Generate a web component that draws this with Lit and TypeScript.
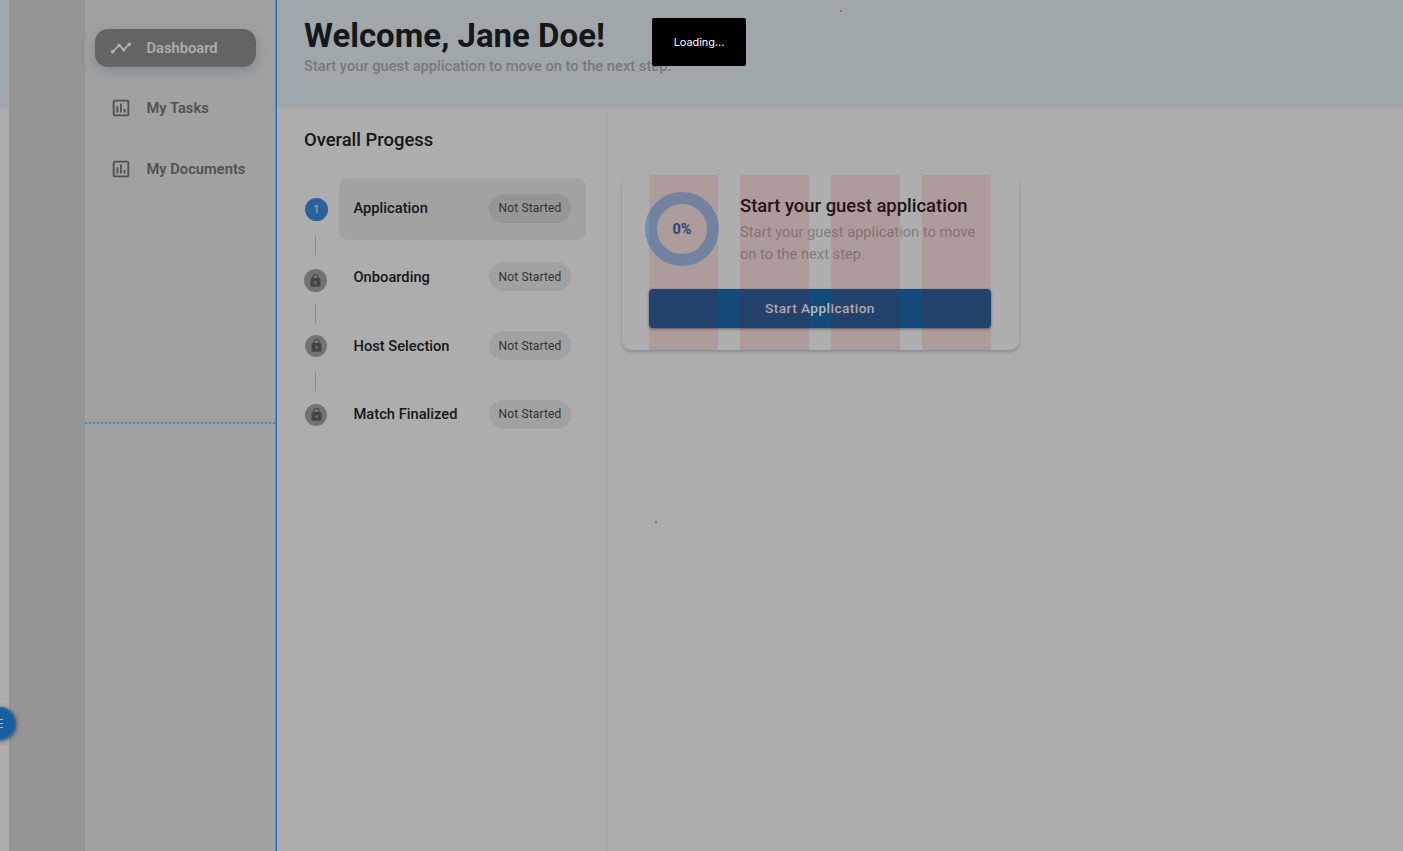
import { LitElement, html, css, svg } from "lit";
import { customElement } from "lit/decorators.js";

const chartIcon = svg`<svg class="icon" viewBox="0 0 24 24" width="22" height="22"><path fill="currentColor" d="M9 17H7v-7h2v7zm4 0h-2V7h2v10zm4 0h-2v-4h2v4zm2 2H5V5h14v14zm0-16H5c-1.100 0-2 .9-2 2v14c0 1.100.9 2 2 2h14c1.100 0 2-.9 2-2V5c0-1.100-.9-2-2-2z"/></svg>`;
const trendIcon = svg`<svg class="icon" viewBox="0 0 24 24" width="22" height="22"><path fill="currentColor" d="M23 8c0 1.100-.9 2-2 2-.18 0-.35-.02-.51-.07l-3.560 3.550c.05.16.07.34.07.52 0 1.100-.9 2-2 2s-2-.9-2-2c0-.18.02-.36.07-.52l-2.550-2.550c-.16.05-.34.07-.52.07s-.36-.02-.52-.07l-4.550 4.560c.05.16.07.33.07.51 0 1.100-.9 2-2 2s-2-.9-2-2 .9-2 2-2c.18 0 .35.02.51.07l4.560-4.550C8.020 9.360 8 9.180 8 9c0-1.100.9-2 2-2s2 .9 2 2c0 .18-.02.36-.07.52l2.550 2.550c.16-.05.34-.07.52-.07s.36.02.52.07l3.550-3.560C19.020 8.350 19 8.180 19 8c0-1.100.9-2 2-2s2 .9 2 2z"/></svg>`;
const lockIcon = svg`<svg viewBox="0 0 24 24" width="15" height="15"><path fill="currentColor" d="M18 8h-1V6c0-2.760-2.240-5-5-5S7 3.240 7 6v2H6c-1.100 0-2 .9-2 2v10c0 1.100.9 2 2 2h12c1.100 0 2-.9 2-2V10c0-1.100-.9-2-2-2zm-6 9c-1.100 0-2-.9-2-2s.9-2 2-2 2 .9 2 2-.9 2-2 2zm3.100-9H8.900V6c0-1.710 1.390-3.100 3.100-3.100 1.710 0 3.100 1.390 3.100 3.100v2z"/></svg>`;

@customElement("app-root")
export class AppRoot extends LitElement {
  static styles = css`
    :host {
      display: block;
      position: relative;
      width: 100%;
      height: 851px;
      overflow: hidden;
      background: #adadad;
      color: #161718;
      font-family: Roboto, "Liberation Sans", sans-serif;
      white-space: nowrap;
    }
    * { box-sizing: border-box; }
    svg { display: block; }
    .page { display: flex; height: 851px; }
    .edge { width: 9px; }
    .edge-top { height: 108px; background: #a0a7ab; border-bottom: 0; box-shadow: 0 1px 0 #a6aaac; }
    .rail { width: 76px; background: #959595; }
    .sidebar {
      width: 192px;
      background: #a1a1a1;
      border-right: 1px solid #2773b5;
      box-shadow: inset -1px 0 0 #6d8193;
      color: #515151;
    }
    .nav {
      height: 423px;
      padding: 28.500px 0 0 10px;
      display: flex;
      flex-direction: column;
      gap: 22px;
    }
    .rule { height: 2px; width: 190px; margin-top: -1px; background: repeating-linear-gradient(90deg, #5886a7 0 2.500px, #8c9aa4 2.500px 4px); }
    .item {
      height: 38.500px;
      width: 161px;
      display: flex;
      align-items: center;
      padding-left: 15px;
      gap: 14.500px;
      font-size: 14.700px;
      font-weight: 600;
    }
    .item.active {
      background: #646464;
      color: #adadad;
      border-radius: 13px;
      box-shadow: 0 4px 12px rgba(95, 118, 134, 0.5);
    }
    .main { flex: 1; display: flex; flex-direction: column; }
    .header { height: 108px; background: #a0a7ab; padding: 16px 0 0 27px; box-shadow: 0 1px 0 #a6aaac; }
    .title { font-size: 33px; line-height: 40px; font-weight: 700; margin: 0; }
    .sub { font-size: 14.700px; line-height: 20px; color: #76797b; font-weight: 500; }
    .body { flex: 1; display: flex; }
    .progress { width: 330px; border-right: 1px solid #a2a2a2; padding: 20px 0 0 27px; }
    .h2 { font-size: 18.400px; line-height: 23px; font-weight: 500; margin: 0 0 26.500px; }
    .step { display: flex; height: 69px; }
    .step.first { height: 66px; }
    .track { width: 35px; display: flex; flex-direction: column; }
    .dot {
      width: 22px;
      height: 22px;
      border-radius: 50%;
      background: #737373;
      color: #454545;
      display: flex;
      align-items: center;
      justify-content: center;
      margin: 22px 0 0 1px;
      flex: none;
    }
    .first .dot { width: 23px; height: 23px; margin-top: 20px; background: #2b629e; color: #a3afbc; font-size: 11.500px; }
    .first + .step .dot { width: 23px; height: 23px; margin: 25px 0 0; }
    .bar { width: 1px; height: 20px; margin: 14px 0 0 11px; background: #8c8c8c; flex: none; }
    .first + .step .bar { margin-top: 12px; }
    .card-row {
      width: 247px;
      height: 62px;
      border-radius: 9px;
      display: flex;
      align-items: center;
      justify-content: space-between;
      padding: 0 15px 0 14.500px;
      font-size: 14.700px;
      font-weight: 500;
    }
    .first .card-row { background: #a2a2a2; padding-bottom: 1px; }
    .step:not(.first) .card-row { margin-top: 2.300px; }
    .step:last-child .card-row { margin-top: 1.500px; }
    .chip {
      width: 82px;
      height: 29px;
      border-radius: 15px;
      background: #a1a1a1;
      color: #313233;
      display: flex;
      align-items: center;
      justify-content: center;
      font-size: 12px;
      font-weight: 400;
      letter-spacing: 0.150px;
    }
    .first .chip { background: #969696; }
    .content { padding: 67px 0 0 15px; }
    .card {
      position: relative;
      width: 397px;
      height: 175px;
      border-radius: 9px;
      background: #aeaeae;
      box-shadow: 0 2px 3px rgba(80, 105, 130, 0.45);
      padding: 16.500px 27px 0;
    }
    .top { display: flex; height: 97px; }
    .ring {
      width: 74px;
      height: 74px;
      margin: 0 21px 0 -4px;
      padding-top: 2px;
      border: 12px solid #6b91b3;
      border-radius: 50%;
      display: flex;
      align-items: center;
      justify-content: center;
      color: #1b4d83;
      font-weight: 700;
      font-size: 14.500px;
    }
    .card-title { font-size: 18.450px; line-height: 24px; font-weight: 500; margin: 2.500px 0 3px; }
    .card-text { font-size: 14.670px; line-height: 22px; color: #808080; }
    .button {
      width: 342px;
      height: 39px;
      border: 0;
      padding: 0 0 1px;
      border-radius: 4px;
      background: #154b79;
      color: #b6b8bb;
      font: 500 13.700px/36px Roboto, sans-serif;
      letter-spacing: 0.420px;
      box-shadow: 0 1px 3px rgba(0, 0, 0, 0.45);
      display: block;
    }
    .guides { position: absolute; inset: 0 27px; display: flex; gap: 22px; pointer-events: none; }
    .guide { width: 69px; background: rgba(173, 0, 0, 0.1); }
    .toast {
      position: absolute;
      left: 652px;
      top: 18px;
      width: 94px;
      height: 48px;
      border-radius: 2px;
      background: #000;
      color: #fff;
      display: flex;
      align-items: center;
      justify-content: center;
      font: 400 10.900px Inter, sans-serif;
    }
    .fab {
      position: absolute;
      left: -17px;
      top: 707px;
      width: 33px;
      height: 33px;
      border-radius: 50%;
      background: #155fa0;
      border: 2px solid #2169a5;
      box-shadow: 0 1px 5px rgba(0, 0, 0, 0.6);
      display: flex;
      flex-direction: column;
      justify-content: center;
      gap: 3px;
      padding-left: 9px;
    }
    .line { width: 9px; height: 1px; background: #a8bac8; }
    .speck { position: absolute; width: 2px; height: 2px; background: #a9598a; }
    .speck.a { left: 840px; top: 10px; }
    .speck.b { left: 655px; top: 521px; }
  `;

  private steps = ["Application", "Onboarding", "Host Selection", "Match Finalized"];

  render() {
    return html`
      <div class="page">
        <div class="edge"><div class="edge-top"></div></div>
        <div class="rail"></div>
        <aside class="sidebar">
          <nav class="nav">
            <div class="item active">${trendIcon}<span>Dashboard</span></div>
            <div class="item">${chartIcon}<span>My Tasks</span></div>
            <div class="item">${chartIcon}<span>My Documents</span></div>
          </nav>
          <div class="rule"></div>
        </aside>
        <main class="main">
          <header class="header">
            <h1 class="title">Welcome, Jane Doe!</h1>
            <div class="sub">Start your guest application to move on to the next step.</div>
          </header>
          <div class="body">
            <section class="progress">
              <h2 class="h2">Overall Progess</h2>
              ${this.steps.map(
                (name, i) => html`<div class="step ${i === 0 ? "first" : ""}">
                  <div class="track">
                    <div class="dot">${i === 0 ? "1" : lockIcon}</div>
                    ${i < 3 ? html`<div class="bar"></div>` : ""}
                  </div>
                  <div class="card-row"><span>${name}</span><span class="chip">Not Started</span></div>
                </div>`
              )}
            </section>
            <section class="content">
              <div class="card">
                <div class="top">
                  <div class="ring">0%</div>
                  <div>
                    <h3 class="card-title">Start your guest application</h3>
                    <div class="card-text">Start your guest application to move<br />on to the next step.</div>
                  </div>
                </div>
                <button class="button">Start Application</button>
                <div class="guides">${[0, 1, 2, 3].map(() => html`<div class="guide"></div>`)}</div>
              </div>
            </section>
          </div>
        </main>
      </div>
      <div class="toast">Loading...</div>
      <div class="fab"><div class="line"></div><div class="line"></div><div class="line"></div></div>
      <div class="speck a"></div>
      <div class="speck b"></div>
    `;
  }
}
